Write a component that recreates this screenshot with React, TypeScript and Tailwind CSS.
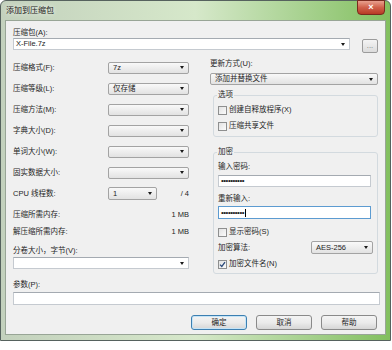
import React from 'react';

const font = "[font-family:'Liberation_Sans','Noto_Sans_CJK_SC',sans-serif]";

function Arrow() {
  return <span className="ml-auto mr-[4px] h-0 w-0 border-x-[2.5px] border-t-[3px] border-x-transparent border-t-[#1a1a1a]" />;
}

function Combo({ value = '', className = '' }: { value?: string; className?: string }) {
  return (
    <div className={`flex h-[12px] items-center rounded-[2px] border border-[#a3a3a3] bg-linear-to-b from-[#f9f9f9] to-[#e2e2e2] pl-[4px] ${className}`}>
      <span className="leading-[10px]">{value}</span>
      <Arrow />
    </div>
  );
}

function EditCombo({ value = '', className = '' }: { value?: string; className?: string }) {
  return (
    <div className={`flex h-[12px] items-center border border-[#c5cad0] border-t-[#a4aab1] bg-white pl-[2px] ${className}`}>
      <span className="leading-[10px]">{value}</span>
      <Arrow />
    </div>
  );
}

function Check({ label, checked = false }: { label: string; checked?: boolean }) {
  return (
    <div className="flex h-[12px] items-center gap-[2px]">
      <span className="flex h-[9px] w-[9px] items-center justify-center border border-[#8e8f8f] bg-linear-to-br from-[#e2e2e2] to-[#fbfbfb]">
        {checked && (
          <svg width="7" height="7" viewBox="0 0 7 7">
            <path d="M1 3.6 L2.8 5.4 L6 1.2" fill="none" stroke="#2b4a7a" strokeWidth="1.3" />
          </svg>
        )}
      </span>
      <span className="leading-[10px]">{label}</span>
    </div>
  );
}

function Button({ label, primary = false }: { label: string; primary?: boolean }) {
  return (
    <div
      className={`flex h-[15px] w-[56px] items-center justify-center rounded-[3px] border bg-linear-to-b from-[#f4f4f4] via-[#ebebeb] to-[#d6d6d6] ${
        primary ? 'border-[#3c7fb1] shadow-[inset_0_0_0_1px_#c5e4f7]' : 'border-[#8a8a8a]'
      }`}
    >
      {label}
    </div>
  );
}

const leftRows: [string, string][] = [
  ['压缩格式(F):', '7z'],
  ['压缩等级(L):', '仅存储'],
  ['压缩方法(M):', ''],
  ['字典大小(D):', ''],
  ['单词大小(W):', ''],
  ['固实数据大小:', ''],
];

export default function App() {
  return (
    <div className={`h-[350px] w-[392px] bg-white text-[7.5px] text-[#1e1e1e] ${font}`}>
      <div className="relative flex h-[341px] w-[391px] flex-col rounded-t-[6px] border border-[#56625e] bg-linear-to-r from-[#c3d1bd] via-[#d6e8ca] to-[#82bf5e]">
        {/* Title bar */}
        <div className="flex h-[20px] items-center pl-[5px] text-[8px] text-[#1a1a1a] [text-shadow:0_0_5px_#fff]">
          添加到压缩包
        </div>
        <div className="absolute right-[5px] top-[-1px] flex h-[15px] w-[28px] items-center justify-center rounded-b-[4px] border border-[#7a2a1e] bg-linear-to-b from-[#e8a08e] via-[#d0604a] to-[#b73a24] text-[9px] font-bold leading-none text-white">
          ×
        </div>

        {/* Client area */}
        <div className="ml-[5px] flex h-[313px] w-[379px] flex-col bg-[#f0f0f0] px-[7px] pt-[7px] outline outline-[#98a596]">
          <div className="h-[10px] leading-[10px]">压缩包(A):</div>
          <div className="flex items-start">
            <EditCombo value="X-File.7z" className="w-[337px]" />
            <div className="ml-auto mt-[1px] flex h-[14px] w-[16px] items-center justify-center rounded-[2px] border border-[#9c9c9c] bg-linear-to-b from-[#f4f4f4] to-[#dcdcdc] text-[#777]">
              ...
            </div>
          </div>

          <div className="mt-[4px] flex h-[218px] gap-[21px]">
            {/* Left column */}
            <div className="flex w-[176px] flex-col">
              {leftRows.map(([label, value]) => (
                <div key={label} className="flex h-[21px] items-center">
                  <span className="w-[95px] leading-[10px]">{label}</span>
                  <Combo value={value} className="w-[81px]" />
                </div>
              ))}
              <div className="flex h-[21px] items-center">
                <span className="w-[95px] leading-[10px]">CPU 线程数:</span>
                <Combo value="1" className="h-[13px] w-[49px]" />
                <span className="ml-auto leading-[10px]">/ 4</span>
              </div>
              <div className="mt-[2px] flex h-[17px] items-center justify-between">
                <span>压缩所需内存:</span>
                <span>1 MB</span>
              </div>
              <div className="flex h-[17px] items-center justify-between">
                <span>解压缩所需内存:</span>
                <span>1 MB</span>
              </div>
              <div className="mt-[6px] h-[10px] leading-[10px]">分卷大小，字节(V):</div>
              <EditCombo className="mt-[1px] w-[176px]" />
            </div>

            {/* Right column */}
            <div className="flex w-[168px] flex-col">
              <div className="mt-[2px] h-[10px] leading-[10px]">更新方式(U):</div>
              <Combo value="添加并替换文件" className="mt-[4px] w-[168px]" />

              <fieldset className="ml-[3px] mt-[5px] rounded-[3px] border border-[#d3dadf] px-[4px]">
                <legend className="ml-[-1px] px-[1px] leading-[10px]">选项</legend>
                <div className="mt-[4px] flex flex-col gap-[4px]">
                  <Check label="创建自释放程序(X)" />
                  <Check label="压缩共享文件" />
                </div>
                <div className="h-[4px]" />
              </fieldset>

              <fieldset className="ml-[3px] mt-[10px] rounded-[3px] border border-[#d3dadf] px-[4px] pb-[3px]">
                <legend className="ml-[-1px] px-[1px] leading-[10px]">加密</legend>
                <div className="mt-[5px] h-[10px] leading-[10px]">输入密码:</div>
                <div className="mt-[3px] flex h-[12px] w-[153px] items-center border border-[#c5cad0] border-t-[#a4aab1] bg-white pl-[2px] text-[8px] leading-none tracking-[-0.5px]">
                  ••••••••••
                </div>
                <div className="mt-[7px] h-[10px] leading-[10px]">重新输入:</div>
                <div className="mt-[2px] flex h-[13px] w-[153px] items-center border border-[#5c9bd1] bg-white pl-[2px] text-[8px] leading-none tracking-[-0.5px]">
                  ••••••••••
                  <span className="ml-[1px] h-[8px] w-px bg-black" />
                </div>
                <div className="mt-[7px]">
                  <Check label="显示密码(S)" />
                </div>
                <div className="mt-[3px] flex h-[13px] items-center">
                  <span className="leading-[10px]">加密算法:</span>
                  <Combo value="AES-256" className="ml-auto h-[13px] w-[62px]" />
                </div>
                <div className="mt-[4px]">
                  <Check label="加密文件名(N)" checked />
                </div>
              </fieldset>
            </div>
          </div>

          <div className="mt-[5px] h-[10px] leading-[10px]">参数(P):</div>
          <div className="mt-[2px] h-[13px] w-[367px] border border-[#c5cad0] border-t-[#a4aab1] bg-white" />

          <div className="mt-[10px] flex justify-end gap-[9px] pr-[1px]">
            <Button label="确定" primary />
            <Button label="取消" />
            <Button label="帮助" />
          </div>
        </div>
      </div>
    </div>
  );
}
